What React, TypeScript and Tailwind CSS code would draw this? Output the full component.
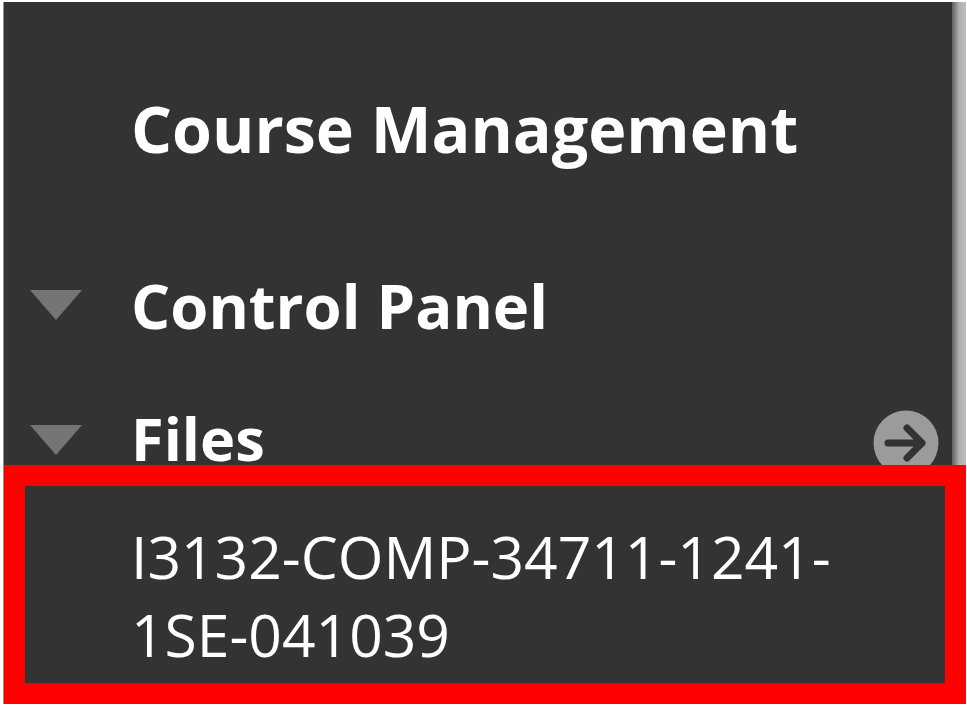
export default function App() {
  const font = { fontFamily: '"Open Sans", sans-serif' };
  return (
    <div className="w-[967px] h-[705px] bg-white overflow-hidden pt-[2px] pl-[3px] flex flex-col text-white" style={font}>
      <div className="flex flex-col w-[963px] h-[702px] border-l border-[#8f8f8f]">
        <div className="flex flex-1 min-h-0">
          <div className="w-[948px] bg-[#333333] flex flex-col pl-[127px] overflow-hidden">
            <h1 className="text-[64.5px] leading-[80px] font-bold mt-[86px] whitespace-nowrap">Course Management</h1>
            <div className="relative flex items-center h-[80px] mt-[97px] shrink-0">
              <Tri />
              <span className="text-[61.6px] font-bold leading-[80px]">Control Panel</span>
            </div>
            <div className="relative flex items-center h-[80px] mt-[55px] pb-[4px] shrink-0">
              <Tri />
              <span className="text-[59.5px] font-bold leading-[62px]">Files</span>
              <svg className="absolute right-[13px] top-[10px]" width="66" height="66" viewBox="0 0 66 66">
                <circle cx="33" cy="33" r="32.5" fill="#9b9b9b" />
                <path d="M15 33H49M34 18L49 33L34 48" fill="none" stroke="#333333" strokeWidth="7" strokeLinecap="round" strokeLinejoin="round" />
              </svg>
            </div>
          </div>
          <div className="flex-1 bg-gradient-to-r from-[#5f5f5f] via-[#b0b0b0] to-[#bdbdbd]" />
        </div>
        <div className="h-[239px] shrink-0 border-[21px] border-[#ff0000] bg-[#333333] pl-[106px] pt-[31px]">
          <p className="text-[58.75px] leading-[78px] whitespace-nowrap">I3132-COMP-34711-1241-<br />1SE-041039</p>
        </div>
      </div>
    </div>
  );
}

function Tri() {
  return (
    <svg className="absolute left-[-101px] top-[25px]" width="52" height="30" viewBox="0 0 52 30">
      <polygon points="0,0 52,0 26,30" fill="#757575" />
    </svg>
  );
}
